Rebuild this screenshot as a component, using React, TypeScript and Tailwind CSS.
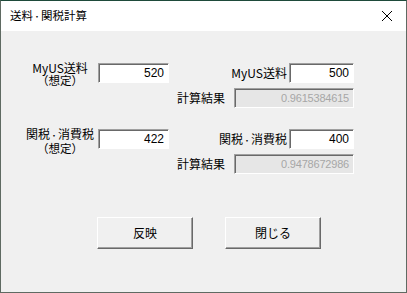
import React from "react";

const jp = { fontFamily: '"Noto Sans CJK JP", "Noto Sans", sans-serif' };
const num = { fontFamily: '"Liberation Sans", "DejaVu Sans", sans-serif' };

function NumBox({ value, w }: { value: string; w: string }) {
    return (
        <div
            className={`${w} h-[20px] box-border bg-white border border-t-[#a0a0a0] border-l-[#a0a0a0] border-b-white border-r-white shadow-[inset_1px_1px_0_#696969] flex items-center justify-end pr-[4px] text-[12px] text-black`}
            style={num}
        >
            {value}
        </div>
    );
}

function ResultBox({ value }: { value: string }) {
    return (
        <div
            className="w-[120px] h-[20px] box-border bg-[#e6e6e6] border border-t-[#a0a0a0] border-l-[#a0a0a0] border-b-white border-r-white shadow-[inset_1px_1px_0_#696969] flex items-center justify-end pr-[4px] text-[11px] text-[#a6a6a6] tracking-[-0.2px]"
            style={num}
        >
            {value}
        </div>
    );
}

function Button({ label }: { label: string }) {
    return (
        <button
            className="w-[96px] h-[32px] box-border bg-[#f0f0f0] border border-t-white border-l-white border-b-[#696969] border-r-[#696969] shadow-[inset_-1px_-1px_0_#a0a0a0] text-[12px] text-black"
            style={jp}
        >
            {label}
        </button>
    );
}

// narrow middle dot, like the dialog font draws it
const Dot = () => <span className="text-[8px]">・</span>;

function Group({ left, right, input, target, result }: {
    left: React.ReactNode;
    right: React.ReactNode;
    input: string;
    target: string;
    result: string;
}) {
    return (
        <div className="flex items-start pl-[24px]">
            <div className="w-[70px] -mt-[2px] flex flex-col items-center text-[12px] leading-[13px] text-black whitespace-nowrap" style={jp}>
                <div>{left}</div>
                <div className="text-[11.5px]">（想定）</div>
            </div>
            <div className="ml-[3px]">
                <NumBox value={input} w="w-[71px]" />
            </div>
            <div className="ml-[8px] w-[177px] flex flex-col">
                <div className="flex items-center justify-end gap-[2px]">
                    <span className="text-[12px] text-black whitespace-nowrap" style={jp}>{right}</span>
                    <NumBox value={target} w="w-[65px] h-[19px]" />
                </div>
                <div className="flex items-center mt-[5px]">
                    <span className="w-[57px] text-[12px] text-black" style={jp}>計算結果</span>
                    <ResultBox value={result} />
                </div>
            </div>
        </div>
    );
}

export default function App() {
    return (
        <div className="w-[407px] h-[293px] box-border border border-[#5f6a62] border-t-[#1e4a3a] bg-[#f0f0f0] flex flex-col overflow-hidden">
            {/* TITLE BAR */}
            <div className="h-[30px] bg-white flex items-center justify-between pl-[9px] pr-[9px] shrink-0">
                <span className="text-[11.5px] text-black" style={jp}>送料<Dot />関税計算</span>
                <svg width="12" height="12" viewBox="0 0 12 12" className="mr-[4px]">
                    <path d="M1 1 L11 11 M11 1 L1 11" stroke="#000" strokeWidth="1" />
                </svg>
            </div>

            {/* BODY */}
            <div className="flex flex-col pt-[32px]">
                <Group
                    left="MyUS送料"
                    right="MyUS送料"
                    input="520"
                    target="500"
                    result="0.9615384615"
                />
                <div className="mt-[21px]">
                    <Group
                        left={<>関税<Dot />消費税</>}
                        right={<>関税<Dot />消費税</>}
                        input="422"
                        target="400"
                        result="0.9478672986"
                    />
                </div>
                <div className="flex gap-[32px] pl-[96px] mt-[43px]">
                    <Button label="反映" />
                    <Button label="閉じる" />
                </div>
            </div>
        </div>
    );
}
